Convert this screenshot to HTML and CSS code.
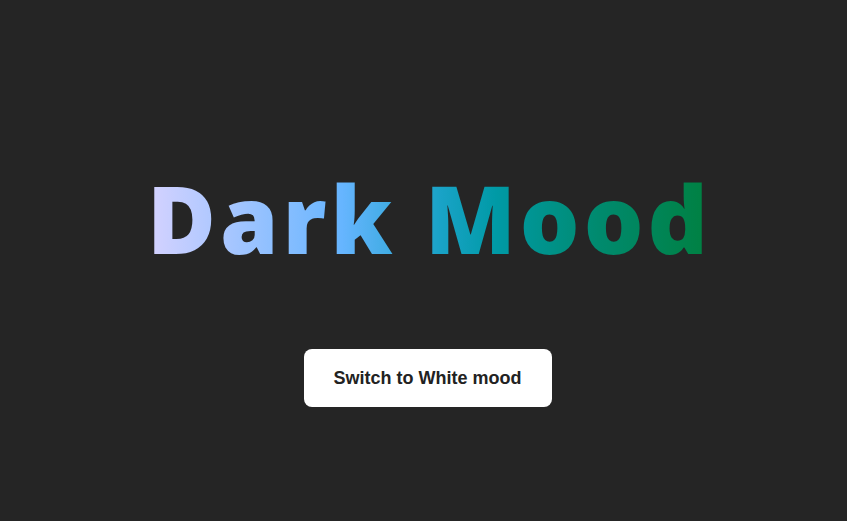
FILE: index.html
```html
<!DOCTYPE html>
<html>
<head>
<meta charset="utf-8">
<link rel="stylesheet" href="styles.css">
</head>
<body>
<main class="page">
  <h1 class="title">Dark Mood</h1>
  <button class="switch">Switch to White mood</button>
</main>
</body>
</html>
```
FILE: styles.css
```css
html, body {
  margin: 0;
  padding: 0;
  background: #252525;
}
.page {
  height: 521px;
  display: flex;
  flex-direction: column;
  align-items: center;
  padding-top: 166px;
  padding-left: 8px;
  box-sizing: border-box;
}
.title {
  margin: 0;
  font-family: "Open Sans", sans-serif;
  font-weight: 800;
  font-size: 94px;
  line-height: 104px;
  letter-spacing: 4px;
  padding-left: 4px;
  background: linear-gradient(90deg, #d8d3ff 0%, #66b5ff 35%, #1aa3c8 52%, #009aa6 62%, #008a6e 80%, #008040 100%);
  -webkit-background-clip: text;
  background-clip: text;
  color: transparent;
}
.switch {
  margin-top: 79px;
  width: 248px;
  height: 58px;
  border: none;
  border-radius: 8px;
  background: #ffffff;
  color: #222222;
  font-family: "Liberation Sans", Arial, sans-serif;
  font-weight: 700;
  font-size: 18px;
  padding: 0;
  cursor: pointer;
}
```
